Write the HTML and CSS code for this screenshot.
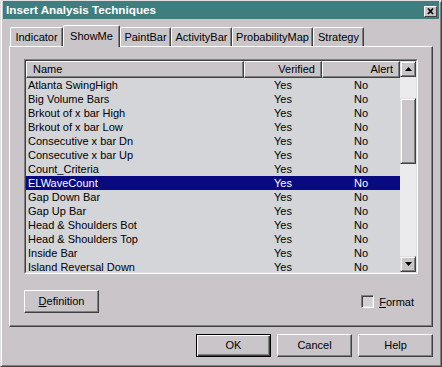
FILE: index.html
```html
<!DOCTYPE html>
<html>
<head>
<meta charset="utf-8">
<link rel="stylesheet" href="styles.css">
</head>
<body>
<div class="dialog">
  <div class="titlebar">
    <span class="title">Insert Analysis Techniques</span>
    <span class="close"><svg width="11" height="9" viewBox="0 0 11 9"><path d="M3 1.5 L8 7 M8 1.5 L3 7" stroke="#000" stroke-width="1.7" fill="none"/></svg></span>
  </div>
  <div class="content">
    <div class="tabs">
      <div class="tab w-ind">Indicator</div>
      <div class="tab tab-active w-show">ShowMe</div>
      <div class="tab w-paint">PaintBar</div>
      <div class="tab w-act">ActivityBar</div>
      <div class="tab w-prob">ProbabilityMap</div>
      <div class="tab w-strat">Strategy</div>
    </div>
    <div class="panel">
      <div class="listbox">
        <div class="listinner">
          <div class="listmain">
            <div class="hdr">
              <div class="hc hc-name">Name</div>
              <div class="hc hc-ver">Verified</div>
              <div class="hc hc-alert">Alert</div>
            </div>
            <div class="rows">
              <div class="row"><span class="c-name">Atlanta SwingHigh</span><span class="c-val">Yes</span><span class="c-val">No</span></div>
              <div class="row"><span class="c-name">Big Volume Bars</span><span class="c-val">Yes</span><span class="c-val">No</span></div>
              <div class="row"><span class="c-name">Brkout of x bar High</span><span class="c-val">Yes</span><span class="c-val">No</span></div>
              <div class="row"><span class="c-name">Brkout of x bar Low</span><span class="c-val">Yes</span><span class="c-val">No</span></div>
              <div class="row"><span class="c-name">Consecutive x bar Dn</span><span class="c-val">Yes</span><span class="c-val">No</span></div>
              <div class="row"><span class="c-name">Consecutive x bar Up</span><span class="c-val">Yes</span><span class="c-val">No</span></div>
              <div class="row"><span class="c-name">Count_Criteria</span><span class="c-val">Yes</span><span class="c-val">No</span></div>
              <div class="row row-sel"><span class="c-name">ELWaveCount</span><span class="c-val">Yes</span><span class="c-val">No</span></div>
              <div class="row"><span class="c-name">Gap Down Bar</span><span class="c-val">Yes</span><span class="c-val">No</span></div>
              <div class="row"><span class="c-name">Gap Up Bar</span><span class="c-val">Yes</span><span class="c-val">No</span></div>
              <div class="row"><span class="c-name">Head &amp; Shoulders Bot</span><span class="c-val">Yes</span><span class="c-val">No</span></div>
              <div class="row"><span class="c-name">Head &amp; Shoulders Top</span><span class="c-val">Yes</span><span class="c-val">No</span></div>
              <div class="row"><span class="c-name">Inside Bar</span><span class="c-val">Yes</span><span class="c-val">No</span></div>
              <div class="row"><span class="c-name">Island Reversal Down</span><span class="c-val">Yes</span><span class="c-val">No</span></div>
            </div>
          </div>
          <div class="vscroll">
            <div class="sbtn"><svg width="7" height="4" viewBox="0 0 7 4"><polygon points="3.5,0 7,4 0,4" fill="#000"/></svg></div>
            <div class="track track-top"></div>
            <div class="thumb"></div>
            <div class="track track-rest"></div>
            <div class="sbtn"><svg width="7" height="4" viewBox="0 0 7 4"><polygon points="0,0 7,0 3.5,4" fill="#000"/></svg></div>
          </div>
        </div>
      </div>
      <div class="foot">
        <div class="btn btn-def"><u>D</u>efinition</div>
        <div class="check"><span class="cbox"></span><span class="clabel"><u>F</u>ormat</span></div>
      </div>
    </div>
    <div class="buttons">
      <div class="btn btn-default">OK</div>
      <div class="btn">Cancel</div>
      <div class="btn">Help</div>
    </div>
  </div>
</div>
</body>
</html>
```
FILE: styles.css
```css
html, body {
  margin: 0;
  padding: 0;
  background: #c9c5c9;
}
body {
  font-family: "Liberation Sans", Arial, sans-serif;
  font-size: 11px;
  color: #000;
}
.dialog {
  width: 442px;
  height: 367px;
  box-sizing: border-box;
  background: #c9c5c9;
  border: 1px solid;
  border-color: #dfdfdf #404040 #404040 #dfdfdf;
  box-shadow: inset 1px 1px #fff, inset -1px -1px #808080;
  padding: 0 2px 2px 2px;
}
.titlebar {
  height: 18px;
  background: #3f7e7e;
  display: flex;
  align-items: center;
  justify-content: space-between;
  padding: 0 2px 0 3px;
}
.title {
  color: #fff;
  font-weight: bold;
  font-size: 11.7px;
  line-height: 18px;
}
.close {
  width: 11px;
  height: 9px;
  background: #c9c5c9;
  border: 1px solid;
  border-color: #fff #404040 #404040 #fff;
  display: flex;
  margin-top: 2px;
}
.content {
  padding: 0 6px;
}
.tabs {
  margin-top: 6px;
  height: 21px;
  display: flex;
  align-items: flex-end;
  padding-left: 1px;
}
.tab {
  box-sizing: border-box;
  height: 19px;
  border-top: 1px solid #fff;
  border-left: 1px solid #fff;
  border-right: 1px solid #404040;
  box-shadow: inset -1px 0 #808080;
  border-radius: 2px 2px 0 0;
  text-align: center;
  padding-top: 2px;
  line-height: 14px;
}
.tab-active {
  height: 22px;
  margin-bottom: -1px;
  padding-top: 3px;
  position: relative;
  z-index: 1;
  background: #c9c5c9;
}
.w-ind { width: 53px; }
.w-show { width: 57px; }
.w-paint { width: 51px; }
.w-act { width: 61px; }
.w-prob { width: 81px; }
.w-strat { width: 51px; }
.panel {
  height: 281px;
  box-sizing: border-box;
  border: 1px solid;
  border-color: #fff #404040 #404040 #fff;
  box-shadow: inset -1px -1px #808080;
  padding: 12px 13px 0 14px;
}
.listbox {
  width: 394px;
  height: 215px;
  box-sizing: border-box;
  border: 1px solid;
  border-color: #808080 #fff #fff #808080;
}
.listinner {
  height: 100%;
  box-sizing: border-box;
  border: 1px solid;
  border-color: #404040 #dfdfdf #dfdfdf #404040;
  display: grid;
  grid-template-columns: 374px 16px;
  background: #d3d5d9;
  overflow: hidden;
}
.listmain {
  overflow: hidden;
}
.hdr {
  display: grid;
  grid-template-columns: 218px 78px 78px;
  height: 17px;
}
.hc {
  box-sizing: border-box;
  background: #c9c5c9;
  border: 1px solid;
  border-color: #fff #404040 #404040 #fff;
  box-shadow: inset -1px -1px #808080;
  line-height: 14px;
  padding: 0 6px;
}
.hc-name { text-align: left; }
.hc-ver, .hc-alert { text-align: right; }
.row {
  display: grid;
  grid-template-columns: 218px 78px 78px;
  height: 14px;
  line-height: 14px;
  white-space: nowrap;
}
.c-name { padding-left: 2px; }
.c-val { text-align: center; }
.row-sel {
  background: #0a0a80;
  color: #fff;
}
.vscroll {
  display: flex;
  flex-direction: column;
  background: #ebebed;
}
.sbtn {
  height: 16px;
  box-sizing: border-box;
  background: #c9c5c9;
  border: 1px solid;
  border-color: #dfdfdf #404040 #404040 #dfdfdf;
  box-shadow: inset 1px 1px #fff, inset -1px -1px #808080;
  display: flex;
  align-items: center;
  justify-content: center;
}
.track-top { height: 21px; }
.thumb {
  height: 66px;
  box-sizing: border-box;
  background: #c9c5c9;
  border: 1px solid;
  border-color: #dfdfdf #404040 #404040 #dfdfdf;
  box-shadow: inset 1px 1px #fff, inset -1px -1px #808080;
}
.track-rest { flex: 1; }
.foot {
  margin-top: 16px;
  display: flex;
  justify-content: space-between;
  align-items: center;
  height: 23px;
}
.btn {
  width: 75px;
  height: 23px;
  box-sizing: border-box;
  border: 1px solid;
  border-color: #fff #404040 #404040 #fff;
  box-shadow: inset -1px -1px #808080;
  text-align: center;
  line-height: 20px;
}
.btn-default {
  border-color: #000;
  box-shadow: inset 1px 1px #fff, inset -1px -1px #404040, inset -2px -2px #808080;
}
.check {
  display: flex;
  align-items: center;
  margin-right: 5px;
}
.cbox {
  width: 13px;
  height: 13px;
  box-sizing: border-box;
  border: 1px solid;
  border-color: #808080 #fff #fff #808080;
  box-shadow: inset 1px 1px #404040, inset -1px -1px #dfdfdf;
  background: #d3d0d3;
  margin-right: 5px;
}
.buttons {
  margin-top: 7px;
  display: flex;
  justify-content: flex-end;
  gap: 6px;
  padding-right: 0;
}
```
